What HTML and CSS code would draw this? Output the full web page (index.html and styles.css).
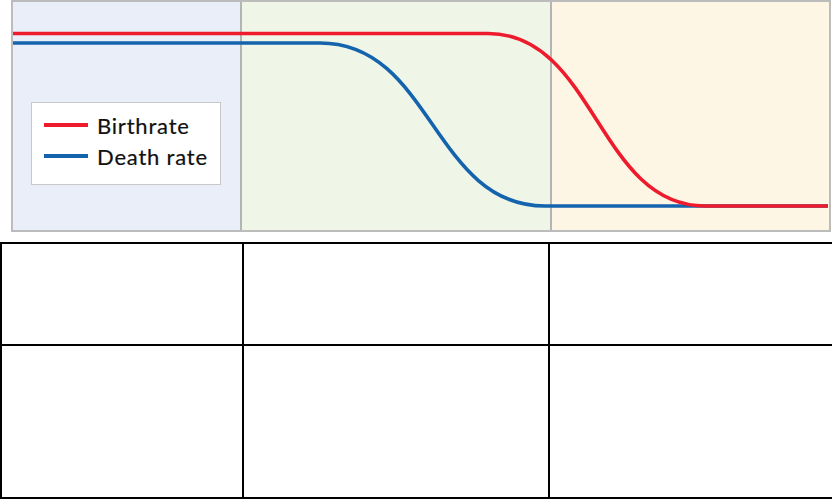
FILE: index.html
```html
<!DOCTYPE html>
<html>
<head>
<meta charset="utf-8">
<link rel="stylesheet" href="styles.css">
</head>
<body>
<div class="chart">
  <div class="panels">
    <div class="panel p1"></div>
    <div class="panel p2"></div>
    <div class="panel p3"></div>
  </div>
  <svg class="curves" width="820" height="232" viewBox="11 0 820 232">
    <path d="M13,43 H320 C432,43 433,206 545,206 H828" fill="none" stroke="#1463ad" stroke-width="3.6"/>
    <path d="M13,33.5 H488 C595,33.5 598,206 705,206 H828" fill="none" stroke="#ee1b2d" stroke-width="3.6"/>
  </svg>
  <div class="legend">
    <div class="item"><span class="swatch red"></span><span class="label">Birthrate</span></div>
    <div class="item"><span class="swatch blue"></span><span class="label">Death rate</span></div>
  </div>
</div>
<div class="grid">
  <div class="cell c1"></div>
  <div class="cell c2"></div>
  <div class="cell c3"></div>
  <div class="cell c1 tall"></div>
  <div class="cell c2 tall"></div>
  <div class="cell c3 tall"></div>
</div>
</body>
</html>
```
FILE: styles.css
```css
html, body {
  margin: 0;
  padding: 0;
  background: #ffffff;
  overflow: hidden;
  font-family: Lato, "Open Sans", sans-serif;
}
.chart {
  position: relative;
  margin-left: 11px;
  width: 820px;
  height: 232px;
  box-sizing: border-box;
  border: 2px solid #bcbcbc;
}
.panels {
  display: flex;
  height: 100%;
}
.panel {
  height: 100%;
}
.p1 {
  width: 227px;
  background: #e9eef8;
  border-right: 2px solid #b4b4b4;
}
.p2 {
  width: 308px;
  background: #eff6e8;
  border-right: 2px solid #b4b4b4;
}
.p3 {
  flex: 1;
  background: #fdf6e4;
}
.curves {
  position: absolute;
  left: -2px;
  top: -2px;
}
.legend {
  position: absolute;
  left: 18px;
  top: 100px;
  width: 190px;
  height: 83px;
  box-sizing: border-box;
  background: #ffffff;
  border: 1px solid #c8c8c8;
  padding: 10px 0 0 12px;
  display: flex;
  flex-direction: column;
  gap: 7px;
}
.item {
  display: flex;
  align-items: center;
  height: 24px;
}
.swatch {
  width: 44px;
  height: 4px;
  margin-right: 9px;
}
.swatch.red { background: #ee1b2d; }
.swatch.blue { background: #1463ad; }
.label {
  font-size: 22px;
  color: #111111;
  letter-spacing: 0.8px;
  -webkit-text-stroke: 0.2px #111111;
}
.grid {
  margin-top: 10px;
  width: 840px;
  display: grid;
  grid-template-columns: 242px 306px 1fr;
  grid-template-rows: 102px 153px;
  border-top: 2px solid #000;
  border-left: 2px solid #000;
}
.cell {
  border-right: 2px solid #000;
  border-bottom: 2px solid #000;
}
```
